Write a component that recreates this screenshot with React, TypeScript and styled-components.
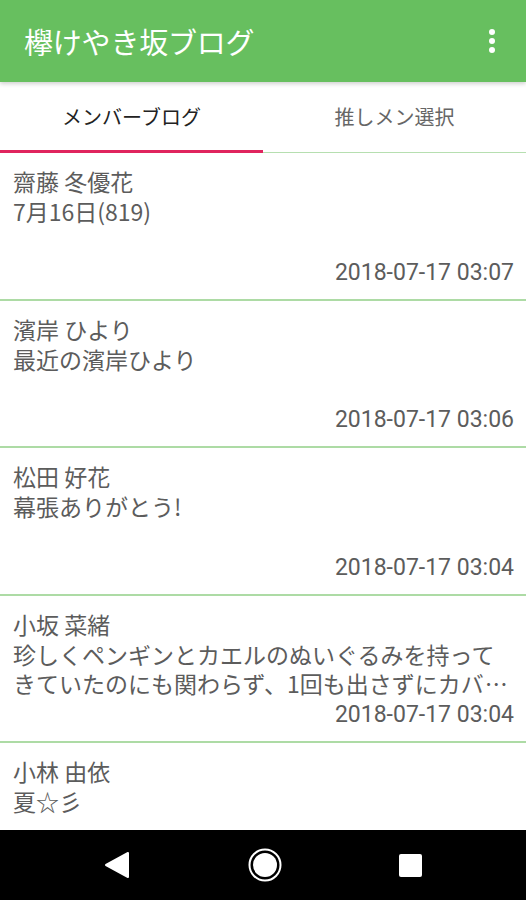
import styled, { createGlobalStyle } from 'styled-components';

const posts = [
  { name: '齋藤 冬優花', title: '7月16日(819)', date: '2018-07-17 03:07' },
  { name: '濱岸 ひより', title: '最近の濱岸ひより', date: '2018-07-17 03:06' },
  { name: '松田 好花', title: '幕張ありがとう!', date: '2018-07-17 03:04' },
  {
    name: '小坂 菜緒',
    title:
      '珍しくペンギンとカエルのぬいぐるみを持ってきていたのにも関わらず、1回も出さずにカバンに入れたまま帰りました',
    date: '2018-07-17 03:04',
  },
  { name: '小林 由依', title: '夏☆彡', date: '2018-07-17 03:02' },
];

function App() {
  return (
    <>
      <GlobalStyle />
      <Screen>
        <AppBar>
          <Title>欅けやき坂ブログ</Title>
          <MenuButton aria-label="menu">
            <Dot />
            <Dot />
            <Dot />
          </MenuButton>
        </AppBar>

        <Tabs>
          <Tab active>メンバーブログ</Tab>
          <Tab>推しメン選択</Tab>
        </Tabs>

        <List>
          {posts.map((post) => (
            <Item key={post.name}>
              <Name>{post.name}</Name>
              <PostTitle>{post.title}</PostTitle>
              <Date>{post.date}</Date>
            </Item>
          ))}
        </List>

        <NavBar>
          <svg width="26" height="28" viewBox="0 0 26 28">
            <path d="M24 2 L24 26 L2 14 Z" fill="#fff" stroke="#fff" strokeWidth="2" strokeLinejoin="round" />
          </svg>
          <svg width="36" height="36" viewBox="0 0 36 36">
            <circle cx="18" cy="18" r="15.5" fill="none" stroke="#fff" strokeWidth="2" />
            <circle cx="18" cy="18" r="12" fill="#fff" />
          </svg>
          <Square />
        </NavBar>
      </Screen>
    </>
  );
}

export default App;

const GlobalStyle = createGlobalStyle`
  html, body {
    margin: 0;
    padding: 0;
    background: #fff;
  }
  body {
    font-family: Roboto, "Noto Sans CJK JP", sans-serif;
  }
`;

const Screen = styled.div`
  width: 526px;
  height: 900px;
  display: flex;
  flex-direction: column;
  overflow: hidden;
  background: #fff;
`;

const AppBar = styled.header`
  height: 82px;
  flex-shrink: 0;
  display: flex;
  align-items: center;
  justify-content: space-between;
  padding: 0 20px 0 24px;
  box-sizing: border-box;
  background: #67bf5f;
  box-shadow: 0 2px 4px rgba(0, 0, 0, 0.18);
  position: relative;
  z-index: 1;
`;

const Title = styled.h1`
  margin: 0;
  font-family: "Noto Sans CJK JP", sans-serif;
  font-size: 29px;
  font-weight: 400;
  color: #fff;
  letter-spacing: -0.2px;
`;

const MenuButton = styled.div`
  width: 28px;
  display: flex;
  flex-direction: column;
  align-items: center;
  gap: 3px;
`;

const Dot = styled.span`
  width: 6px;
  height: 6px;
  border-radius: 50%;
  background: #fff;
`;

const Tabs = styled.nav`
  height: 71px;
  flex-shrink: 0;
  display: flex;
  border-bottom: 1px solid #b6dfb0;
  box-sizing: border-box;
`;

const Tab = styled.div<{ active?: boolean }>`
  flex: 1;
  display: flex;
  align-items: center;
  justify-content: center;
  font-family: "Noto Sans CJK JP", sans-serif;
  font-size: 20px;
  color: ${(p) => (p.active ? '#222' : '#666')};
  border-bottom: 3px solid ${(p) => (p.active ? '#e0245e' : 'transparent')};
  margin-bottom: -1px;
`;

const List = styled.main`
  flex: 1;
  overflow: hidden;
`;

const Item = styled.article`
  min-height: 147.5px;
  box-sizing: border-box;
  display: flex;
  flex-direction: column;
  padding: 12px 12px 12px 13px;
  border-bottom: 2px solid #addba5;
  color: #5c5c5c;
  font-family: "Noto Sans CJK JP", sans-serif;
  font-size: 23px;
`;

const Name = styled.div`
  line-height: 32px;
`;

const PostTitle = styled.div`
  line-height: 29px;
  display: -webkit-box;
  -webkit-line-clamp: 2;
  -webkit-box-orient: vertical;
  overflow: hidden;
`;

const Date = styled.div`
  margin-top: auto;
  text-align: right;
  line-height: 29px;
  font-family: Roboto, sans-serif;
`;

const NavBar = styled.footer`
  height: 70px;
  flex-shrink: 0;
  background: #000;
  display: flex;
  align-items: center;
  justify-content: space-between;
  padding: 0 104px 0 104px;
  box-sizing: border-box;
`;

const Square = styled.span`
  width: 23px;
  height: 23px;
  border-radius: 2px;
  background: #fff;
`;
